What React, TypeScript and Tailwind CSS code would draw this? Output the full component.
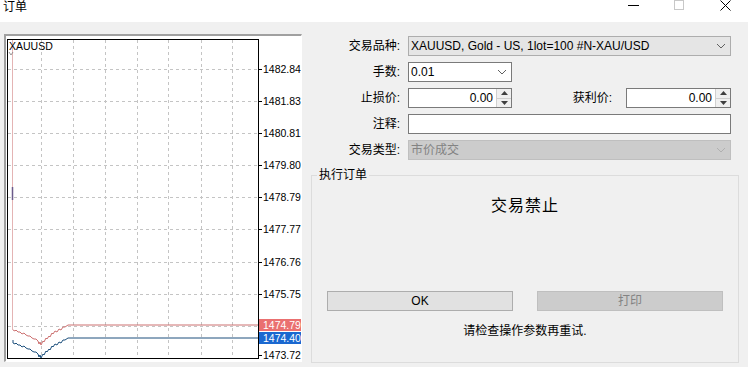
import React from "react";

const UI_FONT = "font-['Liberation_Sans','Noto_Sans_CJK_SC',sans-serif]";

// Price axis levels — y is in page coordinates (the chart svg uses a matching viewBox)
const LEVELS = [
  { y: 69, label: "1482.84" },
  { y: 101, label: "1481.83" },
  { y: 133, label: "1480.81" },
  { y: 165, label: "1479.80" },
  { y: 197, label: "1478.79" },
  { y: 229, label: "1477.77" },
  { y: 262, label: "1476.76" },
  { y: 294, label: "1475.75" },
];
const GRID_X = [41, 73, 105, 137, 168, 201, 232];

// Jagged tick path: ask (red) and bid (blue) run in parallel, 13px apart
const TICKS = [
  [13, 330], [15, 331], [16, 330], [18, 332], [20, 332], [22, 334], [24, 333], [26, 335], [28, 336],
  [30, 336], [32, 338], [34, 339], [36, 339], [38, 341], [39, 344], [40, 342], [41, 345], [43, 341],
  [44, 342], [46, 338], [47, 339], [49, 336], [50, 337], [52, 333], [53, 334], [55, 331], [57, 332],
  [59, 329], [61, 330], [63, 327], [65, 327], [68, 325], [258, 325],
];
const ASK = TICKS;
const BID = [[13, 340], ...TICKS.map(([x, y], i) => [x, i === TICKS.length - 1 || i === TICKS.length - 2 ? 338 : y + 13])];

const pts = (p: number[][]) => p.map(([x, y]) => `${x},${y}`).join(" ");

function Chevron({ disabled }: { disabled?: boolean }) {
  return (
    <svg width="10" height="6" viewBox="0 0 10 6" className="shrink-0">
      <path d="M1 1 L5 5 L9 1" fill="none" stroke={disabled ? "#b0b0b0" : "#606060"} strokeWidth="1" />
    </svg>
  );
}

function Spinner() {
  return (
    <div className="flex h-full w-[15px] flex-col border-l border-[#d0d0d0] bg-[#f0f0f0]">
      <div className="flex flex-1 items-center justify-center border-b border-[#d0d0d0]">
        <svg width="7" height="4" viewBox="0 0 7 4">
          <path d="M0 4 L3.5 0 L7 4 Z" fill="#404040" />
        </svg>
      </div>
      <div className="flex flex-1 items-center justify-center">
        <svg width="7" height="4" viewBox="0 0 7 4">
          <path d="M0 0 L3.5 4 L7 0 Z" fill="#404040" />
        </svg>
      </div>
    </div>
  );
}

function Label({ children }: { children: React.ReactNode }) {
  return <div className="w-[98px] shrink-0 text-right text-[12px] text-black">{children}</div>;
}

function Chart() {
  return (
    <div className="h-[328px] w-[298px] shrink-0 border-l-2 border-t-2 border-[#a0a0a0] border-r border-b border-r-white border-b-white bg-white">
      <svg width="295" height="325" viewBox="6 36 295 325" className="block font-['Liberation_Sans',sans-serif]">
        {GRID_X.map((x) => (
          <line key={x} x1={x + 0.5} y1={40} x2={x + 0.5} y2={358} stroke="#c4c4c4" strokeDasharray="3 3" />
        ))}
        {[...LEVELS, { y: 326, label: "" }].map((l) => (
          <line key={l.y} x1={8} y1={l.y + 0.5} x2={258} y2={l.y + 0.5} stroke="#c4c4c4" strokeDasharray="3 3" />
        ))}
        {[...LEVELS, { y: 355, label: "1473.72" }].map((l) => (
          <g key={l.label}>
            <line x1={258} y1={l.y + 0.5} x2={262} y2={l.y + 0.5} stroke="#000" />
            <text x={263} y={l.y + 4} fontSize="10.5" fill="#000">
              {l.label}
            </text>
          </g>
        ))}
        <line x1={12.5} y1={40} x2={12.5} y2={330} stroke="#e4b4b4" />
        <line x1={12.5} y1={187} x2={12.5} y2={200} stroke="#6b5a8a" strokeWidth="1.5" />
        <polyline points={pts(ASK)} fill="none" stroke="#cc7070" />
        <polyline points={pts(BID)} fill="none" stroke="#1c4f7c" />
        <rect x={7.5} y={39.5} width={251} height={319} fill="none" stroke="#000" />
        <rect x={259} y={319} width={43} height={12} fill="#ea7070" />
        <text x={263} y={329} fontSize="10.5" fill="#fff">1474.79</text>
        <rect x={259} y={332} width={43} height={12} fill="#1a68d0" />
        <text x={263} y={342} fontSize="10.5" fill="#fff">1474.40</text>
        <text x={9} y={50} fontSize="10.5" fill="#000">XAUUSD</text>
        <path d="M9 52 L11 55 L13 52" fill="none" stroke="#808080" strokeWidth="0.8" />
      </svg>
    </div>
  );
}

export default function App() {
  return (
    <div className={`flex h-[367px] w-[748px] flex-col overflow-hidden bg-white ${UI_FONT}`}>
      {/* Title bar, cropped at the top */}
      <div className="flex h-[22px] shrink-0 items-start bg-white">
        <div className="pl-[3px] pt-0 text-[12px] leading-[15px] text-black">订单</div>
        <div className="ml-auto flex items-start">
          <div className="flex h-[14px] w-[46px] items-start justify-center pt-[5px]">
            <div className="h-px w-[11px] bg-black" />
          </div>
          <div className="flex h-[14px] w-[46px] items-start justify-center">
            <div className="h-[10px] w-[10px] border border-[#c8c8c8]" />
          </div>
          <div className="flex h-[14px] w-[46px] items-start justify-center">
            <svg width="11" height="11" viewBox="0 0 11 11">
              <path d="M0.5 0.5 L10.5 10.5 M10.5 0.5 L0.5 10.5" stroke="#000" strokeWidth="1" />
            </svg>
          </div>
        </div>
      </div>

      <div className="flex flex-1 bg-[#f0f0f0] pl-[4px] pt-[12px]">
        <Chart />

        <div className="flex flex-1 flex-col pt-[2px]">
          <div className="flex flex-col gap-[6px] pr-[18px]">
            <div className="flex h-[20px] items-center gap-[8px]">
              <Label>交易品种:</Label>
              <div className="flex h-full flex-1 items-center justify-between border border-[#adadad] bg-[#e5e5e5] pl-[2px] pr-[4px] text-[12px] text-black">
                <span>XAUUSD, Gold - US, 1lot=100 #N-XAU/USD</span>
                <Chevron />
              </div>
            </div>
            <div className="flex h-[20px] items-center gap-[8px]">
              <Label>手数:</Label>
              <div className="flex h-full w-[104px] items-center justify-between border border-[#7a7a7a] bg-white pl-[2px] pr-[4px] text-[12px] text-black">
                <span>0.01</span>
                <Chevron />
              </div>
            </div>
            <div className="flex h-[20px] items-center gap-[8px]">
              <Label>止损价:</Label>
              <div className="flex h-full w-[104px] items-center border border-[#7a7a7a] bg-white text-[12px] text-black">
                <span className="flex-1 pr-[3px] text-right">0.00</span>
                <Spinner />
              </div>
              <div className="flex-1 pr-[6px] text-right text-[12px]">获利价:</div>
              <div className="flex h-full w-[105px] items-center border border-[#7a7a7a] bg-white text-[12px] text-black">
                <span className="flex-1 pr-[3px] text-right">0.00</span>
                <Spinner />
              </div>
            </div>
            <div className="flex h-[20px] items-center gap-[8px]">
              <Label>注释:</Label>
              <div className="h-full flex-1 border border-[#7a7a7a] bg-white" />
            </div>
            <div className="flex h-[20px] items-center gap-[8px]">
              <Label>交易类型:</Label>
              <div className="flex h-full flex-1 items-center justify-between border border-[#bfbfbf] bg-[#cccccc] pl-[2px] pr-[4px] text-[12px] text-[#838383]">
                <span>市价成交</span>
                <Chevron disabled />
              </div>
            </div>
          </div>

          {/* Group box "执行订单" */}
          <div className="relative ml-[9px] mr-[10px] mt-[15px] flex h-[188px] flex-col items-center border border-[#dcdcdc]">
            <div className="absolute left-[5px] top-[-9px] bg-[#f0f0f0] px-[2px] text-[12px] leading-[16px] text-black">执行订单</div>
            <div className="mt-[18px] text-[16px] tracking-[1px] text-black">交易禁止</div>
            <div className="mt-auto flex w-full gap-[24px] px-[15px]">
              <div className="flex h-[20px] w-[186px] items-center justify-center border border-[#adadad] bg-[#e1e1e1] text-[12px] text-black">
                OK
              </div>
              <div className="flex h-[20px] w-[186px] items-center justify-center border border-[#bfbfbf] bg-[#cccccc] text-[12px] text-[#838383]">
                打印
              </div>
            </div>
            <div className="mb-[22px] mt-[11px] text-[12px] text-black">请检查操作参数再重试.</div>
          </div>
        </div>
      </div>
    </div>
  );
}
